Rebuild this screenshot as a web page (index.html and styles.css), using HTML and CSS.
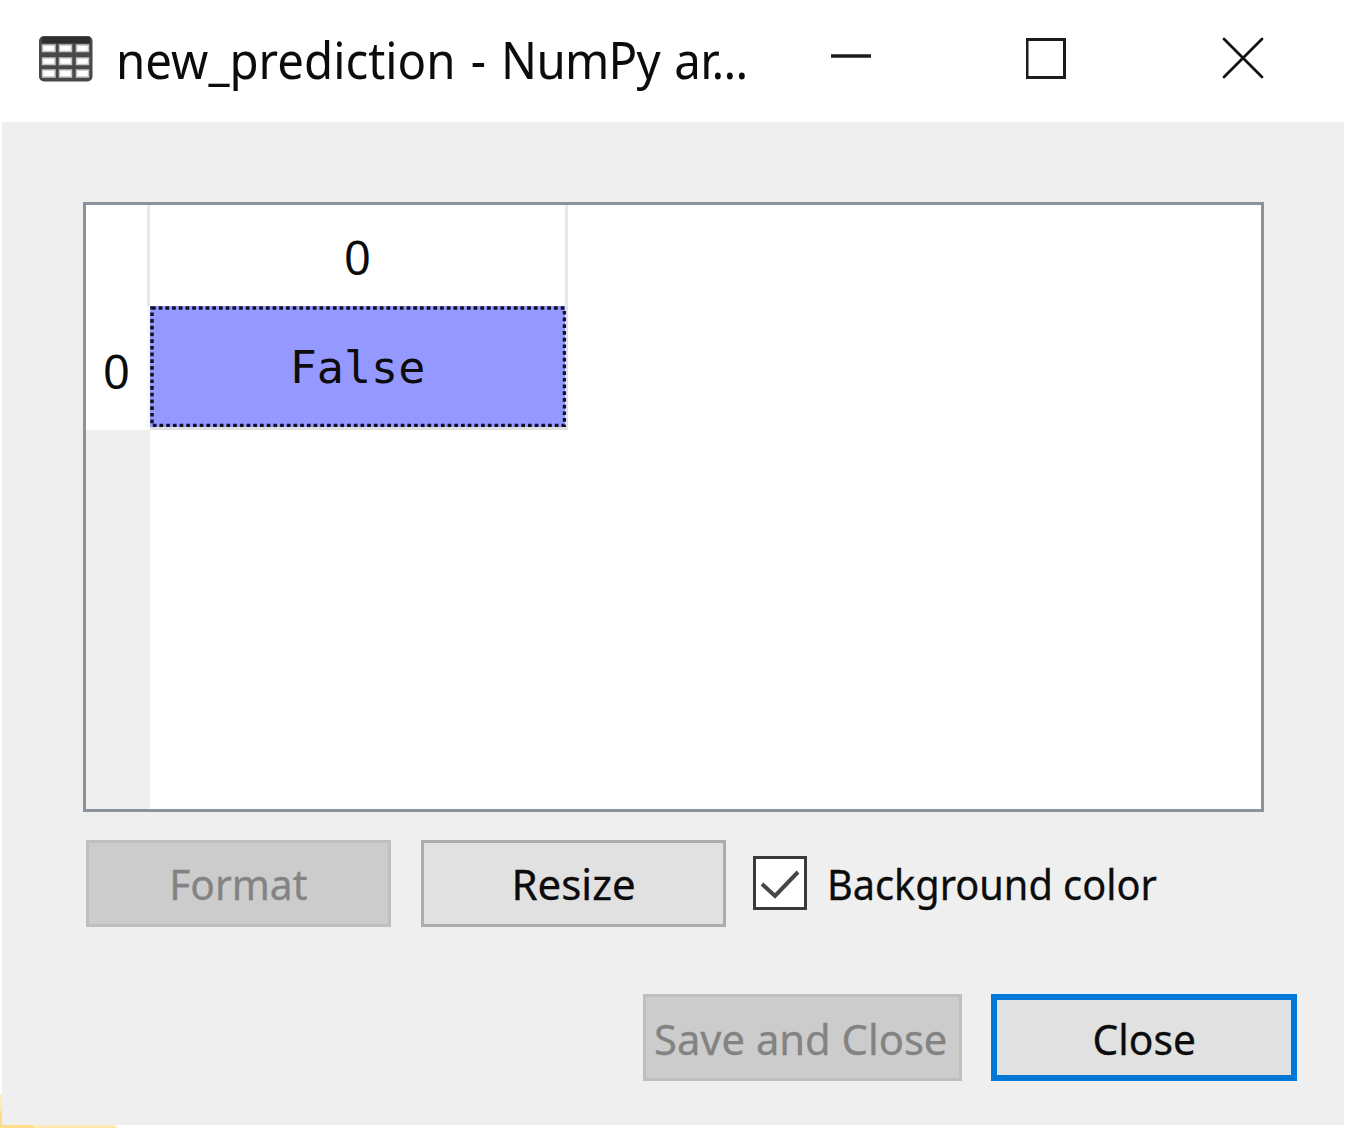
FILE: index.html
```html
<!DOCTYPE html>
<html lang="en">
<head>
<meta charset="utf-8">
<title>new_prediction - NumPy array</title>
<link rel="stylesheet" href="styles.css">
</head>
<body>
<div class="window">
  <header class="titlebar">
    <svg class="app-icon" width="56" height="50" viewBox="0 0 56 50">
      <rect x="1" y="2" width="53.500" height="45.500" rx="5" fill="#484848"/>
      <path d="M4 3h48v6H4z" fill="#2e2e2e"/>
      <g fill="#fff" stroke="#c4c4c4" stroke-width="1.500">
        <path d="M4.500 11h12.500v6.500h-12.500zM21.500 11h12v6.500h-12zM38.500 11h12v6.500h-12zM4.500 24h12.500v6.500h-12.500zM21.500 24h12v6.500h-12zM38.500 24h12v6.500h-12zM4.500 36h12.500v7h-12.500zM21.500 36h12v7h-12zM38.500 36h12v7h-12z"/>
      </g>
    </svg>
    <h1 class="title"><span class="fit fit-title">new_prediction - <span class="kind">NumPy ar...</span></span></h1>
    <div class="controls">
      <svg width="42" height="42" viewBox="0 0 42 42"><path d="M1 19h40" stroke="#1c1c1c" stroke-width="3.400"/></svg>
      <svg width="42" height="42" viewBox="0 0 42 42"><rect x="1" y="2.500" width="37.500" height="38" fill="none" stroke="#1c1c1c" stroke-width="3"/></svg>
      <svg width="42" height="42" viewBox="0 0 42 42"><path d="M2 2l38 38M40 2L2 40" stroke="#111" stroke-width="2.800" stroke-linecap="round"/></svg>
    </div>
  </header>
  <main class="content">
    <div class="grid">
      <div class="corner"></div>
      <div class="col-head"><span>0</span></div>
      <div class="row-head"><span>0</span></div>
      <div class="cell">
        <svg class="focus" width="416" height="121" viewBox="0 0 416 121"><rect x="2" y="2" width="412.500" height="117.500"/></svg>
        <span>False</span>
      </div>
      <div class="gutter"></div>
    </div>
    <div class="options">
      <button class="btn disabled"><span class="fit fit-format">Format</span></button>
      <button class="btn"><span>Resize</span></button>
      <label class="check">
        <svg width="54" height="54" viewBox="0 0 54 54"><rect x="1.500" y="1.500" width="51" height="51" fill="#fff" stroke="#3a3a3a" stroke-width="3"/><path d="M9 28l13 12 23-24" fill="none" stroke="#464646" stroke-width="4"/></svg>
        <span class="fit fit-check">Background color</span>
      </label>
    </div>
    <div class="actions">
      <button class="btn disabled save"><span class="fit fit-save">Save and Close</span></button>
      <button class="btn primary"><span class="fit fit-close">Close</span></button>
    </div>
  </main>
</div>
<svg class="desktop" width="118" height="34" viewBox="0 0 118 34"><path d="M0 0l2 1v30h112l4 3H0z" fill="#ffe9b5"/><path d="M0 17h2v14h30l3 3H0z" fill="#ffdc89"/></svg>
</body>
</html>
```
FILE: styles.css
```css
* { box-sizing: border-box; }
body {
  margin: 0;
  height: 1128px;
  overflow: hidden;
  background: #fff;
  color: #0c0c0c;
  font-family: "Noto Sans", sans-serif;
}
.window { width: 1342px; margin-left: 2px; height: 1125px; display: flex; flex-direction: column; }
.titlebar { height: 122px; display: flex; padding: 34px 80px 0 36px; align-items: flex-start; }
.app-icon { margin-right: 22px; }
.title { margin: -2px 0 0; font-size: 51px; font-weight: 400; line-height: 54px; width: 634px; white-space: nowrap; word-spacing: 3px; }
.kind { letter-spacing: -.8px; }
.controls { flex: 1; display: flex; justify-content: space-between; padding: 3px 0 0 80px; }
.fit { display: inline-block; white-space: nowrap; }
.fit-title { transform: scaleX(.93); transform-origin: 0 50%; }
.fit-check { transform: scaleX(.945); transform-origin: 0 50%; -webkit-text-stroke: .3px; padding-top: 2px; }
.fit-format { transform: scaleX(.97); }
.fit-close { transform: scaleX(.97); }
.fit-save { transform: scaleX(.993); margin-left: -3px; }
.content { flex: 1; background: #efefef; padding: 80px 47px 0 81px; }
.grid {
  width: 1181px;
  height: 610px;
  border: 3px solid #8b929c;
  background: #fff;
  display: grid;
  grid-template: 101px 124px 1fr / 64px 418px 1fr;
  font-size: 47px;
}
.corner { border-right: 3px solid #e8e8e8; }
.col-head { border-right: 3px solid #e8e8e8; display: flex; justify-content: center; line-height: 105px; }
.row-head { grid-column: 1; display: flex; justify-content: center; line-height: 130px; border-right: 3px solid #f8f8f8; }
.cell {
  position: relative;
  display: flex;
  justify-content: center;
  font: 45px/124px "DejaVu Sans Mono", monospace;
  background: #9599ff;
  border-right: 3px solid #e0e0e0;
  border-bottom: 3px solid #e0e0e0;
}
.focus { position: absolute; inset: 0; }
.focus rect { fill: none; stroke: #111128; stroke-width: 3.500; stroke-dasharray: 3.700 3; }
.gutter { grid-column: 1; grid-row: 3; background: #efefef; }
.options { display: flex; align-items: center; margin-top: 28px; padding-left: 3px; height: 87px; }
.btn {
  width: 305px;
  height: 87px;
  margin: 0 30px 0 0;
  padding: 1px 0 0;
  border: 3px solid #adadad;
  background: #e1e1e1;
  color: #0c0c0c;
  font: 42px/80px "Noto Sans", sans-serif;
  -webkit-text-stroke: .3px;
}
.btn.disabled { background: #ccc; border-color: #bfbfbf; color: #838383; }
.check { display: flex; align-items: center; margin: -2px 0 0 -3px; gap: 20px; font-size: 42px; }
.actions { display: flex; justify-content: flex-end; margin-top: 67px; }
.btn.save { width: 319px; padding-top: 2px; }
.btn.primary { width: 306px; margin: 0 0 0 -1px; padding-top: 2px; border: 6px solid #0078d7; line-height: 73px; }
.desktop { position: absolute; left: 0; top: 1094px; }
```
